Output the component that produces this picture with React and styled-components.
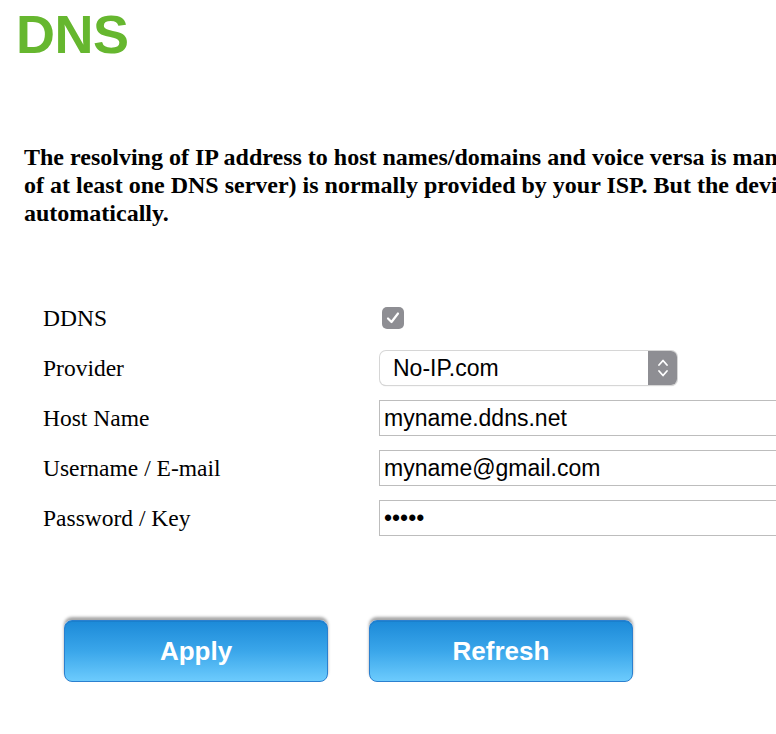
import React from 'react'
import styled, { createGlobalStyle } from 'styled-components'

const GlobalStyle = createGlobalStyle`
  html, body {
    margin: 0;
    padding: 0;
    background: #fff;
    overflow: hidden;
  }
  body {
    width: 776px;
    height: 734px;
  }
`

const Page = styled.div`
  width: 776px;
  height: 734px;
  overflow: hidden;
  background: #fff;
`

const Title = styled.h1`
  margin: 7px 0 0 16px;
  font-family: "Liberation Sans", Arial, sans-serif;
  font-weight: bold;
  font-size: 54px;
  line-height: 54px;
  color: #66b72f;
  letter-spacing: -0.5px;
`

// the sentence runs past the right edge in the original, so lines are broken by hand
const Intro = styled.p`
  margin: 82px 0 0 24px;
  font-family: "Liberation Serif", "Times New Roman", serif;
  font-weight: bold;
  font-size: 24px;
  line-height: 28px;
  color: #000;
  white-space: nowrap;
`

const Form = styled.div`
  display: grid;
  grid-template-columns: 336px 1fr;
  grid-auto-rows: 50px;
  align-items: center;
  margin: 66px 0 0 43px;
`

const Label = styled.div`
  font-family: "Liberation Serif", "Times New Roman", serif;
  font-size: 23.5px;
  color: #000;
`

const Check = styled.span`
  display: flex;
  align-items: center;
  justify-content: center;
  width: 22px;
  height: 22px;
  margin-left: 3px;
  border-radius: 5px;
  background: #8e8e93;
`

const Select = styled.div`
  display: flex;
  align-items: stretch;
  width: 297px;
  height: 34px;
  margin-left: 1px;
  box-sizing: border-box;
  border-radius: 6px;
  background: #fff;
  box-shadow: 0 0 0 1px #d6d6d6, 0 1px 1px rgba(0, 0, 0, 0.25);
  overflow: hidden;
`

const SelectText = styled.span`
  flex: 1;
  display: flex;
  align-items: center;
  padding-left: 13px;
  font-family: "Liberation Sans", Arial, sans-serif;
  font-size: 23px;
  color: #000;
`

const Stepper = styled.span`
  display: flex;
  align-items: center;
  justify-content: center;
  width: 29px;
  background: #8e8e93;
`

const Field = styled.input`
  width: 430px;
  height: 36px;
  box-sizing: border-box;
  margin: 0;
  padding: 0 4px;
  border: 1px solid #bdbdbd;
  border-radius: 0;
  outline: none;
  font-family: "Liberation Sans", Arial, sans-serif;
  font-size: 23px;
  color: #000;
  background: #fff;
`

const Buttons = styled.div`
  display: flex;
  gap: 41px;
  margin: 77px 0 0 64px;
`

const Button = styled.button`
  width: 264px;
  height: 62px;
  border: 1px solid #2b80cf;
  border-radius: 8px;
  background: linear-gradient(#1c8ad8, #3aa6ea 50%, #6ccbfd);
  box-shadow: 0 -3px 3px rgba(0, 0, 0, 0.35), inset 0 1px 0 #1a7fcc;
  color: #fff;
  font-family: "Liberation Sans", Arial, sans-serif;
  font-weight: bold;
  font-size: 26px;
  cursor: pointer;
`

const CheckMark = () => (
  <svg width="16" height="16" viewBox="0 0 16 16">
    <path d="M3 8.5 L6.5 12 L13 3.5" fill="none" stroke="#fff" strokeWidth="2.2" strokeLinecap="round" strokeLinejoin="round" />
  </svg>
)

const Chevrons = () => (
  <svg width="14" height="24" viewBox="0 0 14 24">
    <path d="M3 9 L7 4.5 L11 9" fill="none" stroke="#fff" strokeWidth="1.8" strokeLinecap="round" strokeLinejoin="round" />
    <path d="M3 15 L7 19.5 L11 15" fill="none" stroke="#fff" strokeWidth="1.8" strokeLinecap="round" strokeLinejoin="round" />
  </svg>
)

export default function App() {
  return (
    <Page>
      <GlobalStyle />
      <Title>DNS</Title>
      <Intro>
        The resolving of IP address to host names/domains and voice versa is managed by DNS servers. The configuration (the address
        <br />
        of at least one DNS server) is normally provided by your ISP. But the device can also obtain these settings
        <br />
        automatically.
      </Intro>
      <Form>
        <Label>DDNS</Label>
        <div><Check><CheckMark /></Check></div>
        <Label>Provider</Label>
        <Select>
          <SelectText>No-IP.com</SelectText>
          <Stepper><Chevrons /></Stepper>
        </Select>
        <Label>Host Name</Label>
        <Field readOnly value="myname.ddns.net" />
        <Label>Username / E-mail</Label>
        <Field readOnly value="myname@gmail.com" />
        <Label>Password / Key</Label>
        <Field readOnly type="password" value="12345" />
      </Form>
      <Buttons>
        <Button>Apply</Button>
        <Button>Refresh</Button>
      </Buttons>
    </Page>
  )
}
